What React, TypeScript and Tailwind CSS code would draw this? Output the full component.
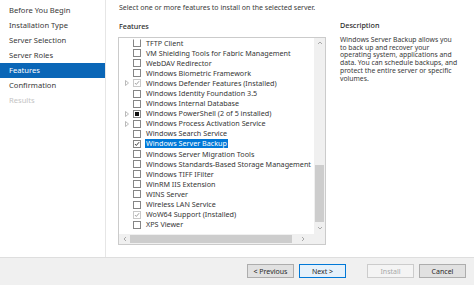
import React from "react";

type Row = { t: string; exp?: boolean; state?: "none" | "checked" | "installed" | "partial"; sel?: boolean };

const rows: Row[] = [
  { t: "TFTP Client" },
  { t: "VM Shielding Tools for Fabric Management" },
  { t: "WebDAV Redirector" },
  { t: "Windows Biometric Framework" },
  { t: "Windows Defender Features (Installed)", exp: true, state: "installed" },
  { t: "Windows Identity Foundation 3.5" },
  { t: "Windows Internal Database" },
  { t: "Windows PowerShell (2 of 5 installed)", exp: true, state: "partial" },
  { t: "Windows Process Activation Service", exp: true },
  { t: "Windows Search Service" },
  { t: "Windows Server Backup", state: "checked", sel: true },
  { t: "Windows Server Migration Tools" },
  { t: "Windows Standards-Based Storage Management" },
  { t: "Windows TIFF IFilter" },
  { t: "WinRM IIS Extension" },
  { t: "WINS Server" },
  { t: "Wireless LAN Service" },
  { t: "WoW64 Support (Installed)", state: "installed" },
  { t: "XPS Viewer" },
];

const nav = ["Before You Begin", "Installation Type", "Server Selection", "Server Roles", "Features", "Confirmation", "Results"];

function Check({ color }: { color: string }) {
  return (
    <svg width="8" height="8" viewBox="0 0 8 8" className="block">
      <path d="M1.3 4.1 L3.1 5.9 L6.8 1.6" fill="none" stroke={color} strokeWidth="1.1" />
    </svg>
  );
}

function Box({ state, first }: { state?: Row["state"]; first?: boolean }) {
  const installed = state === "installed";
  return (
    <div
      className={`w-[8px] h-[8px] border flex items-center justify-center ${
        installed ? "border-[#c8c8c8]" : "border-[#858585]"
      } ${first ? "border-t-transparent" : ""} bg-white`}
    >
      {state === "checked" && <Check color="#111" />}
      {installed && <Check color="#8c8c8c" />}
      {state === "partial" && <div className="w-[4px] h-[4px] bg-[#111]" />}
    </div>
  );
}

function Expander() {
  return (
    <svg width="4" height="6" viewBox="0 0 4 6" className="block">
      <path d="M0.5 0.5 L3.5 3 L0.5 5.5 Z" fill="none" stroke="#a8a8a8" strokeWidth="0.8" />
    </svg>
  );
}

function Chevron({ dir }: { dir: "up" | "down" | "left" | "right" }) {
  const d =
    dir === "up"
      ? "M1 4 L3 2 L5 4"
      : dir === "down"
      ? "M1 2 L3 4 L5 2"
      : dir === "left"
      ? "M4 1 L2 3 L4 5"
      : "M2 1 L4 3 L2 5";
  return (
    <svg width="6" height="6" viewBox="0 0 6 6" className="block">
      <path d={d} fill="none" stroke="#a0a0a0" strokeWidth="0.9" />
    </svg>
  );
}

function Btn({ children, kind }: { children: React.ReactNode; kind?: "default" | "disabled" }) {
  const cls =
    kind === "default"
      ? "border-[#0078d7] bg-[#e5f1fb] text-[#2a2a2a]"
      : kind === "disabled"
      ? "border-[#cccccc] bg-[#f4f4f4] text-[#a8a8a8]"
      : "border-[#adadad] bg-[#e1e1e1] text-[#2a2a2a]";
  return (
    <div className={`w-[47px] h-[14px] border flex items-center justify-center text-[7px] leading-none ${cls}`}>
      {children}
    </div>
  );
}

export default function App() {
  return (
    <div className="w-[474px] h-[285px] bg-white flex flex-col overflow-hidden font-['Noto_Sans',sans-serif] text-[#333333]">
      <div className="flex h-[257px]">
        <nav className="w-[106px] border-r border-[#e6e6e6] pt-[3px] shrink-0">
          {nav.map((n) => (
            <div
              key={n}
              className={`h-[15px] leading-[15px] pl-[9px] text-[7.6px] whitespace-nowrap ${
                n === "Features" ? "bg-[#0a66b7] text-white" : n === "Results" ? "text-[#c4c4c4]" : "text-[#383838]"
              }`}
            >
              {n}
            </div>
          ))}
        </nav>
        <div className="flex-1 pl-[12px] pt-[3px]">
          <div className="h-[10px] leading-[10px] text-[7px] pl-[1px] whitespace-nowrap text-[#3a3a3a]">
            Select one or more features to install on the selected server.
          </div>
          <div className="flex">
            <div className="w-[208px] shrink-0">
              <div className="mt-[8px] h-[10px] leading-[10px] text-[7.2px] pl-[1px] font-medium text-[#2a2a2a]">Features</div>
              <div className="mt-[6px] h-[208px] border border-[#cbcbcb] flex flex-col">
                <div className="flex h-[196px]">
                  <div className="flex-1 overflow-hidden">
                    {rows.map((r, i) => (
                      <div key={r.t} className="flex items-center h-[10.1px]">
                        <div className="w-[14px] flex justify-center pl-[1px]">{r.exp && <Expander />}</div>
                        <Box state={r.state} first={i === 0} />
                        <span
                          className={`ml-[4px] px-[1px] h-[9px] leading-[9px] text-[7.2px] whitespace-nowrap ${
                            r.sel ? "bg-[#0078d7] text-white" : "text-[#353535]"
                          }`}
                        >
                          {r.t}
                        </span>
                      </div>
                    ))}
                  </div>
                  <div className="w-[11px] bg-[#f0f0f0] flex flex-col items-center">
                    <div className="h-[10px] flex items-center justify-center">
                      <Chevron dir="up" />
                    </div>
                    <div className="h-[117px]" />
                    <div className="w-[9px] h-[57px] bg-[#cdcdcd]" />
                    <div className="flex-1 flex items-center justify-center">
                      <Chevron dir="down" />
                    </div>
                  </div>
                </div>
                <div className="flex h-[10px] bg-[#f0f0f0]">
                  <div className="w-[11px] flex items-center justify-center">
                    <Chevron dir="left" />
                  </div>
                  <div className="w-[162px] h-[8px] mt-[1px] bg-[#cdcdcd]" />
                  <div className="flex-1 flex items-center justify-center">
                    <Chevron dir="right" />
                  </div>
                  <div className="w-[11px] bg-[#f0f0f0]" />
                </div>
              </div>
            </div>
            <div className="ml-[14px] pt-[7px]">
              <div className="h-[10px] leading-[10px] text-[7.2px] font-medium text-[#2a2a2a]">Description</div>
              <div className="mt-[6px] text-[6.8px] leading-[7.7px] whitespace-nowrap text-[#383838]">
                <div>Windows Server Backup allows you</div>
                <div>to back up and recover your</div>
                <div>operating system, applications and</div>
                <div>data. You can schedule backups, and</div>
                <div>protect the entire server or specific</div>
                <div>volumes.</div>
              </div>
            </div>
          </div>
        </div>
      </div>
      <div className="h-[28px] border-t border-[#dedede] bg-[#f0f0f0] flex justify-end items-start pt-[6px] pr-[8px]">
        <Btn>&lt; Previous</Btn>
        <div className="w-[5px]" />
        <Btn kind="default">Next &gt;</Btn>
        <div className="w-[21px]" />
        <Btn kind="disabled">Install</Btn>
        <div className="w-[5px]" />
        <Btn>Cancel</Btn>
      </div>
    </div>
  );
}
